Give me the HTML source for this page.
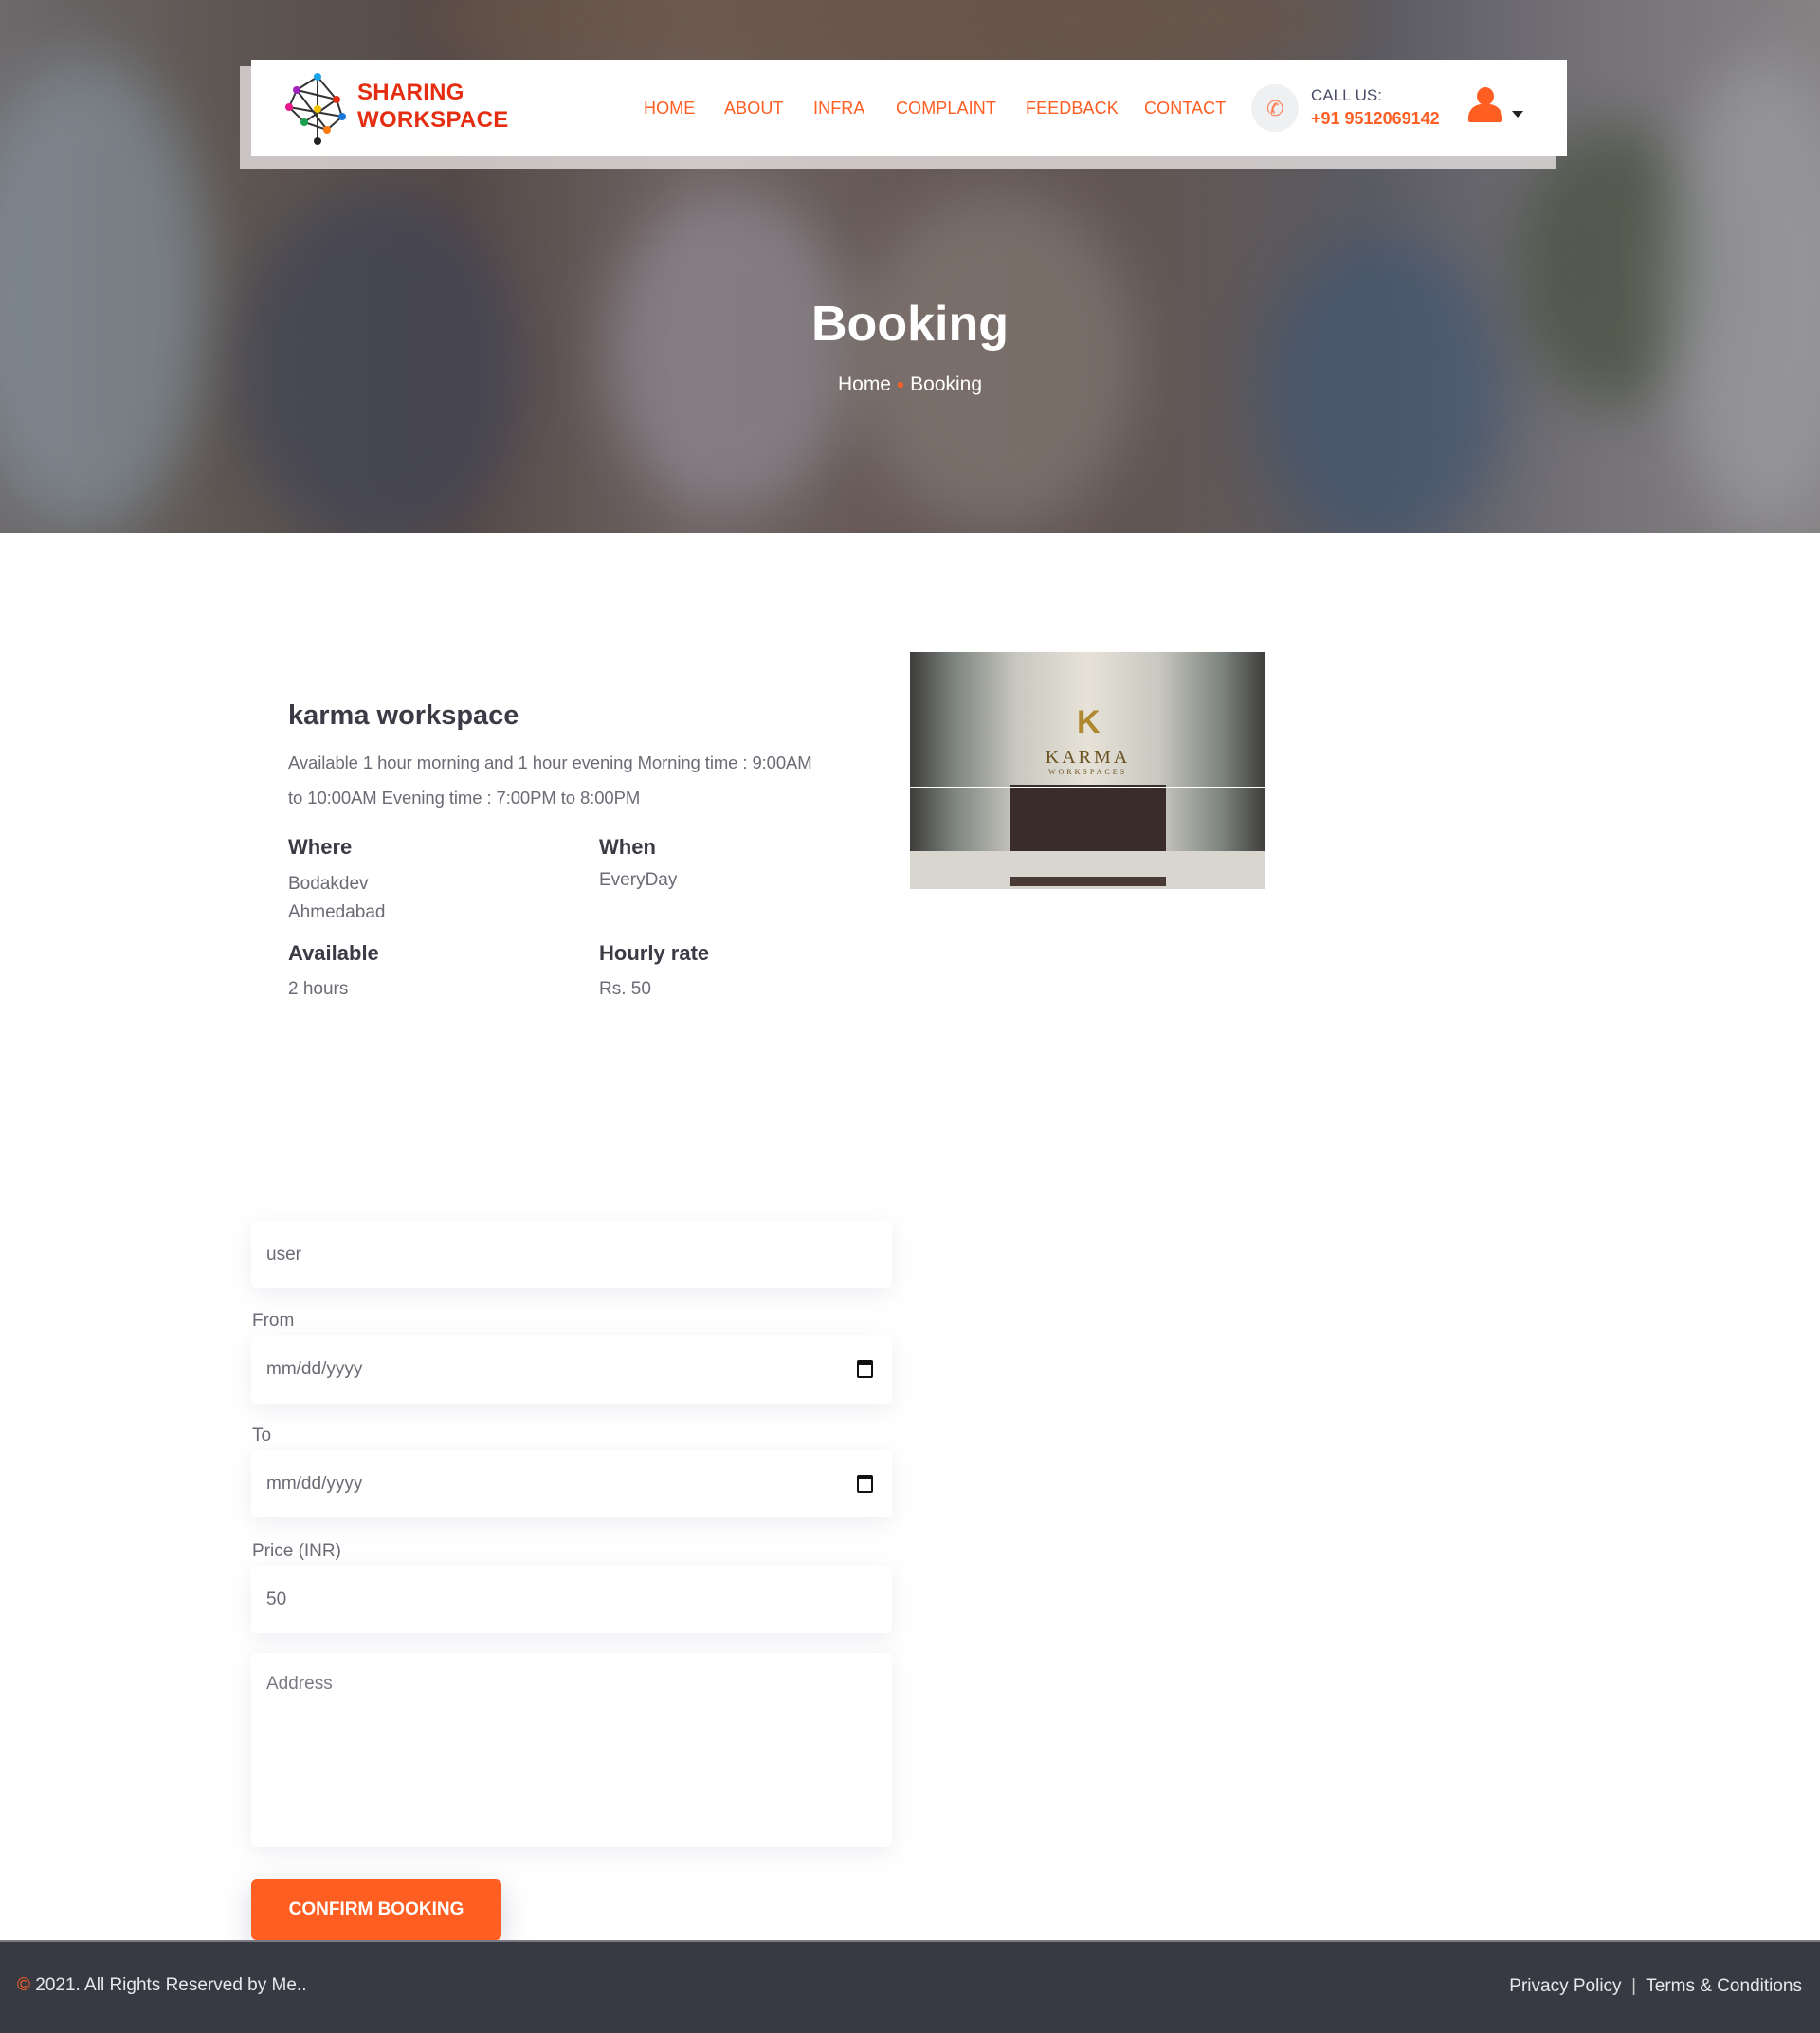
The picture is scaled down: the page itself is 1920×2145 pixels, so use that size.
<!DOCTYPE html>
<html><head><meta charset="utf-8"><style>
*{margin:0;padding:0;box-sizing:border-box}
body{width:1920px;height:2145px;position:relative;background:#fff;font-family:"Liberation Sans",sans-serif;overflow:hidden}
.hero{position:absolute;left:0;top:0;width:1920px;height:562px;overflow:hidden;
background:linear-gradient(90deg,#6d6a6c 0%,#5e5753 12%,#564a48 25%,#6e6262 38%,#655855 50%,#625652 62%,#5a5a62 75%,#767378 88%,#858284 100%)}
.hero .b{position:absolute;border-radius:50%;filter:blur(30px)}
.hdrsh{position:absolute;left:253px;top:70px;width:1388px;height:108px;background:rgba(230,225,225,.8)}
.hdr{position:absolute;left:265px;top:63px;width:1388px;height:102px;background:#fff}
.logo{position:absolute;left:34px;top:14px}
.lt{position:absolute;left:112px;top:20px;color:#e52d12;font-weight:bold;font-size:24px;line-height:29px;letter-spacing:.3px}
.nav{position:absolute;top:41px;font-size:18px;color:#ff5e22;letter-spacing:.1px}
.h1{position:absolute;left:0;width:1920px;top:312px;text-align:center;color:#fff;font-weight:bold;font-size:52px}
.bc{position:absolute;left:0;width:1920px;top:394px;text-align:center;color:#fff;font-size:21px}
.t{position:absolute;color:#6b6b75;font-size:19px}
.h{position:absolute;color:#3c3b45;font-size:22px;font-weight:bold}
.inp{position:absolute;left:265px;width:676px;background:#fff;border-radius:5px;box-shadow:0 6px 24px rgba(120,120,160,.13);font-size:19px;color:#6b6b75;padding-left:16px}
.lbl{position:absolute;left:266px;font-size:19px;color:#6b6b75}
.cal{position:absolute;right:20px;top:26px;width:17px;height:19px;border:2.5px solid #111;border-top-width:5px;border-radius:2px}
</style></head><body>
<div class="hero">
<div class="b" style="left:-40px;top:60px;width:260px;height:500px;background:#8ea0ad;opacity:.5"></div>
<div class="b" style="left:250px;top:200px;width:300px;height:380px;background:#3b4256;opacity:.6"></div>
<div class="b" style="left:640px;top:200px;width:260px;height:340px;background:#9b9aa6;opacity:.5"></div>
<div class="b" style="left:900px;top:200px;width:300px;height:360px;background:#8e857e;opacity:.5"></div>
<div class="b" style="left:1330px;top:250px;width:260px;height:330px;background:#3e5672;opacity:.6"></div>
<div class="b" style="left:1600px;top:130px;width:200px;height:300px;background:#3e4a34;opacity:.6"></div>
<div class="b" style="left:1760px;top:60px;width:200px;height:500px;background:#a6a8ad;opacity:.5"></div>
<div class="b" style="left:450px;top:-60px;width:1000px;height:160px;background:#6b5544;opacity:.6"></div>
</div>
<div class="hdrsh"></div>
<div class="hdr">
<svg class="logo" width="72" height="76" viewBox="0 0 72 76">
<g stroke="#333" stroke-width="2" fill="none"><path d="M36 4 L36 72 M14 18 L56 28 L62 46 L46 60 L22 52 L6 36 L14 18 M14 18 L46 60 M56 28 L22 52 M6 36 L62 46 M36 4 L56 28 M36 4 L14 18"/></g>
<circle cx="36" cy="4" r="4" fill="#1aa3e8"/><circle cx="14" cy="18" r="4" fill="#a020c0"/><circle cx="56" cy="28" r="4" fill="#e52d12"/><circle cx="6" cy="36" r="4" fill="#e8188a"/><circle cx="62" cy="46" r="4" fill="#1a78d8"/><circle cx="36" cy="38" r="4" fill="#f5c400"/><circle cx="22" cy="52" r="4" fill="#18a050"/><circle cx="46" cy="60" r="4" fill="#ff7a10"/><circle cx="36" cy="72" r="4" fill="#222"/>
</svg>
<div class="lt">SHARING<br>WORKSPACE</div>
<div class="nav" style="left:414px">HOME</div>
<div class="nav" style="left:499px">ABOUT</div>
<div class="nav" style="left:593px">INFRA</div>
<div class="nav" style="left:680px">COMPLAINT</div>
<div class="nav" style="left:817px">FEEDBACK</div>
<div class="nav" style="left:942px">CONTACT</div>
<div style="position:absolute;left:1055px;top:26px;width:50px;height:50px;border-radius:50%;background:#eef0f1"></div>
<div style="position:absolute;left:1071px;top:39px;color:#ff7a50;font-size:22px">✆</div>
<div style="position:absolute;left:1118px;top:28px;font-size:17px;color:#4a4d6a">CALL US:</div>
<div style="position:absolute;left:1118px;top:52px;font-size:18px;color:#ff5e22;font-weight:bold">+91 9512069142</div>
<div style="position:absolute;left:1293px;top:29px;width:18px;height:19px;border-radius:50%;background:#ff5e22"></div>
<div style="position:absolute;left:1284px;top:47px;width:36px;height:19px;border-radius:14px 14px 2px 2px;background:#ff5e22"></div>
<div style="position:absolute;left:1330px;top:54px;border:6px solid transparent;border-top:7px solid #222;border-bottom:0"></div>
</div>
<div class="h1">Booking</div>
<div class="bc">Home <span style="color:#ff5e22;font-size:14px;vertical-align:2px">●</span> Booking</div>

<div class="h" style="left:304px;top:739px;font-size:29px">karma workspace</div>
<div class="t" style="left:304px;top:786px;line-height:37px;width:610px;font-size:18.5px;letter-spacing:-.1px">Available 1 hour morning and 1 hour evening Morning time : 9:00AM<br>to 10:00AM Evening time : 7:00PM to 8:00PM</div>
<div class="h" style="left:304px;top:881px">Where</div>
<div class="h" style="left:632px;top:881px">When</div>
<div class="t" style="left:304px;top:918px;line-height:30px">Bodakdev<br>Ahmedabad</div>
<div class="t" style="left:632px;top:918px">EveryDay</div>
<div class="h" style="left:304px;top:993px">Available</div>
<div class="h" style="left:632px;top:993px">Hourly rate</div>
<div class="t" style="left:304px;top:1033px">2 hours</div>
<div class="t" style="left:632px;top:1033px">Rs. 50</div>

<div style="position:absolute;left:960px;top:688px;width:375px;height:250px;overflow:hidden;background:linear-gradient(90deg,#3d3d3a 0%,#7c827e 12%,#c9c8c0 30%,#e6e2d8 50%,#c9c8c0 70%,#7c827e 88%,#3d3d3a 100%)">
<div style="position:absolute;left:105px;top:140px;width:165px;height:80px;background:#3a2c28"></div>
<div style="position:absolute;left:0;top:210px;width:375px;height:40px;background:#d9d6d0"></div>
<div style="position:absolute;left:105px;top:237px;width:165px;height:10px;background:#4a3a36"></div>
<div style="position:absolute;left:0;top:142px;width:375px;height:1px;background:#fff"></div>
<div style="position:absolute;left:0;top:100px;width:375px;text-align:center;font-family:'Liberation Serif',serif;color:#6b5020;font-size:20px;letter-spacing:3px">KARMA</div>
<div style="position:absolute;left:0;top:122px;width:375px;text-align:center;font-family:'Liberation Serif',serif;color:#6b5020;font-size:8px;letter-spacing:3px">WORKSPACES</div>
<div style="position:absolute;left:176px;top:55px;width:24px;height:40px;color:#b08830;font-size:34px;font-weight:bold">K</div>
</div>

<div class="inp" style="top:1288px;height:71px;line-height:71px">user</div>
<div class="lbl" style="top:1383px">From</div>
<div class="inp" style="top:1409px;height:72px;line-height:72px">mm/dd/yyyy<div class="cal"></div></div>
<div class="lbl" style="top:1504px">To</div>
<div class="inp" style="top:1530px;height:71px;line-height:71px">mm/dd/yyyy<div class="cal"></div></div>
<div class="lbl" style="top:1626px">Price (INR)</div>
<div class="inp" style="top:1652px;height:71px;line-height:71px">50</div>
<div class="inp" style="top:1744px;height:205px;padding-top:22px;color:#7a7a84">Address</div>
<div style="position:absolute;left:265px;top:1983px;width:264px;height:64px;background:#ff5e22;border-radius:6px;color:#fff;font-weight:bold;font-size:19px;text-align:center;line-height:64px;box-shadow:0 10px 30px rgba(90,90,140,.25)">CONFIRM BOOKING</div>

<div style="position:absolute;left:0;top:2047px;width:1920px;height:98px;background:#373a42;border-top:2px solid #7a7a80"></div>
<div style="position:absolute;left:18px;top:2084px;font-size:19px;color:#e8e8ec"><span style="color:#ff5e22">©</span> 2021. All Rights Reserved by Me..</div>
<div style="position:absolute;right:19px;top:2085px;font-size:19px;color:#e8e8ec">Privacy Policy &nbsp;<span style="color:#ccc">|</span>&nbsp; Terms &amp; Conditions</div>
</body></html>
